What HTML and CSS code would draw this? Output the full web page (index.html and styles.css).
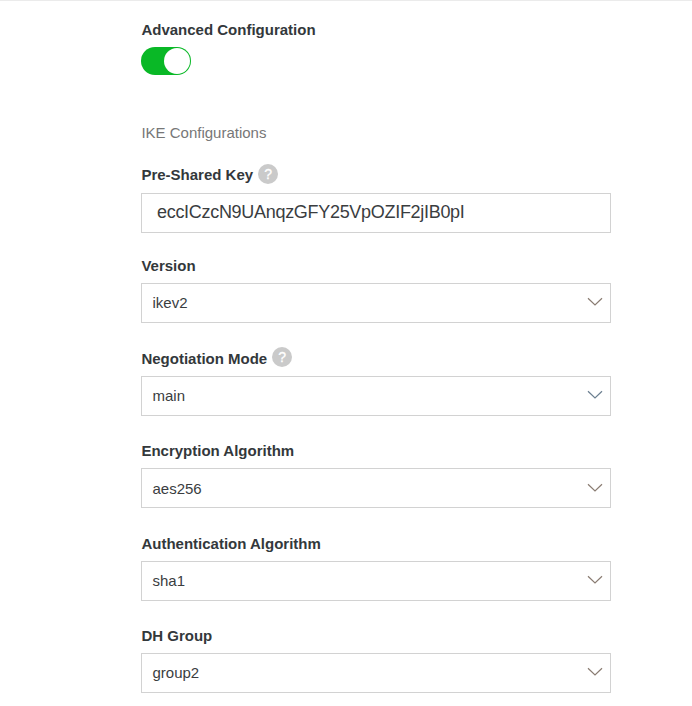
FILE: index.html
```html
<!DOCTYPE html>
<html lang="en">
<head>
<meta charset="utf-8">
<title>Advanced Configuration</title>
<link rel="stylesheet" href="styles.css">
</head>
<body>
<form class="form">
  <div class="toggle-field">
    <div class="label">Advanced Configuration</div>
    <div class="switch"><span class="knob"></span></div>
  </div>
  <div class="section">IKE Configurations</div>
  <div class="field key">
    <div class="label">Pre-Shared Key <span class="help">?</span></div>
    <div class="control input">eccICzcN9UAnqzGFY25VpOZIF2jIB0pI</div>
  </div>
  <div class="field version">
    <div class="label">Version</div>
    <div class="control"><span>ikev2</span><svg class="chevron" viewBox="0 0 16 10"><path d="M1 1.2 8 8 15 1.2"/></svg></div>
  </div>
  <div class="field mode">
    <div class="label">Negotiation Mode <span class="help">?</span></div>
    <div class="control"><span>main</span><svg class="chevron blue" viewBox="0 0 16 10"><path d="M1 1.2 8 8 15 1.2"/></svg></div>
  </div>
  <div class="field encryption">
    <div class="label">Encryption Algorithm</div>
    <div class="control"><span>aes256</span><svg class="chevron" viewBox="0 0 16 10"><path d="M1 1.2 8 8 15 1.2"/></svg></div>
  </div>
  <div class="field auth">
    <div class="label">Authentication Algorithm</div>
    <div class="control"><span>sha1</span><svg class="chevron" viewBox="0 0 16 10"><path d="M1 1.2 8 8 15 1.2"/></svg></div>
  </div>
  <div class="field group">
    <div class="label">DH Group</div>
    <div class="control"><span>group2</span><svg class="chevron" viewBox="0 0 16 10"><path d="M1 1.2 8 8 15 1.2"/></svg></div>
  </div>
</form>
</body>
</html>
```
FILE: styles.css
```css
* { box-sizing: border-box; }
body {
  margin: 0;
  height: 706px;
  overflow: hidden;
  background: #fff;
  border-top: 1px solid #ebebeb;
  font-family: "Liberation Sans", Arial, sans-serif;
  font-size: 15px;
  color: #3a3d3f;
}
.form { width: 470px; margin-left: 141px; padding-top: 19px; }
.label { display: flex; align-items: center; height: 20px; padding-left: 0.4px; line-height: 20px; font-weight: bold; color: #33383b; }
.switch { width: 50px; height: 28px; margin-top: 7px; padding: 1px; border-radius: 14px; background: #09b826; display: flex; justify-content: flex-end; }
.knob { width: 26px; height: 26px; border-radius: 50%; background: #fff; }
.section { margin-top: 48px; height: 20px; padding-left: 0.4px; line-height: 20px; color: #777; }
.help { width: 20px; height: 20px; margin-left: 5px; margin-top: -3px; border-radius: 50%; background: #cacaca; color: #fff; font-size: 14px; font-weight: normal; -webkit-text-stroke: 0.3px #fff; line-height: 20px; text-align: center; }
.control { display: flex; align-items: center; justify-content: space-between; height: 40px; margin-top: 7px; padding: 0 7px 2px 10.5px; border: 1px solid #d2d2d2; }
.key .control { margin-top: 8px; }
.input { padding-left: 15px; font-size: 18px; letter-spacing: -0.3px; }
.chevron { width: 16px; height: 10px; margin-top: -1px; fill: none; stroke: #8a7c72; stroke-width: 1.2; }
.blue { stroke: #6b7f90; }
.field { margin-top: 25px; }
.key { margin-top: 22px; }
.version { margin-top: 23px; }
.mode, .auth { margin-top: 26px; }
.mode .help { margin-top: -5px; }
.encryption .control { padding-bottom: 0; }
```
